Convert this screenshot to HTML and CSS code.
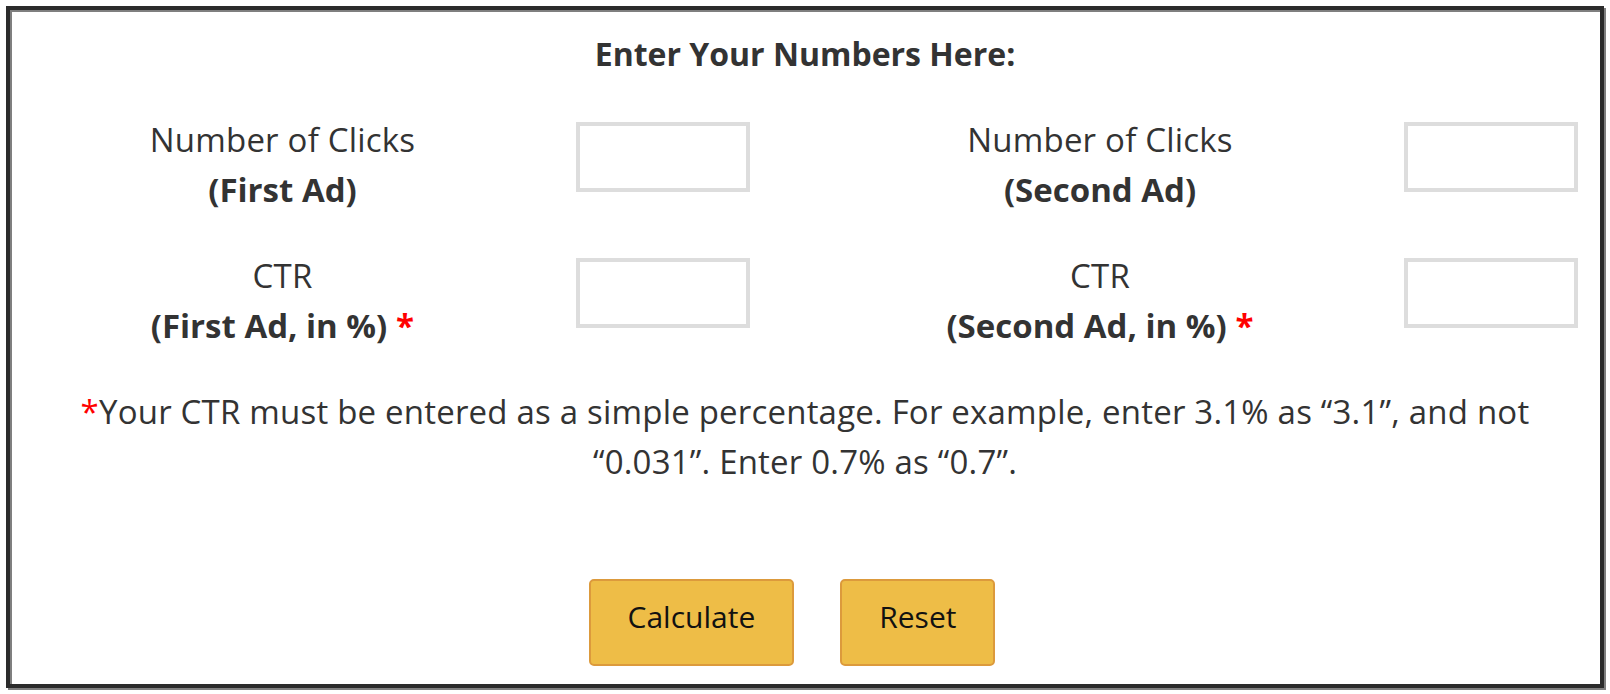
FILE: index.html
```html
<!DOCTYPE html>
<html lang="en">
<head>
<meta charset="utf-8">
<title>CTR Calculator</title>
<link rel="stylesheet" href="styles.css">
</head>
<body>
<div class="frame">
  <h2 class="title">Enter Your Numbers Here:</h2>
  <div class="fields">
    <label class="label label-left">Number of Clicks<br><b>(First Ad)</b></label>
    <input class="field" type="text">
    <label class="label label-right">Number of Clicks<br><b>(Second Ad)</b></label>
    <input class="field" type="text">
    <label class="label label-left">CTR<br><b>(First Ad, in %)</b> <span class="req">*</span></label>
    <input class="field" type="text">
    <label class="label label-right">CTR<br><b>(Second Ad, in %)</b> <span class="req">*</span></label>
    <input class="field" type="text">
  </div>
  <p class="note"><span class="req-plain">*</span>Your CTR must be entered as a simple percentage. For example, enter 3.1% as “3.1”, and not “0.031”. Enter 0.7% as “0.7”.</p>
  <div class="actions">
    <button class="btn" type="button">Calculate</button>
    <button class="btn" type="button">Reset</button>
  </div>
</div>
</body>
</html>
```

FILE: styles.css
```css
html, body {
  margin: 0;
  padding: 0;
  background: #ffffff;
}

body {
  font-family: "Open Sans", "Noto Sans", "Liberation Sans", sans-serif;
  color: #333333;
  font-size: 33px;
  line-height: 50px;
}

.frame {
  box-sizing: border-box;
  width: 1598px;
  height: 682px;
  margin: 6px;
  border: 4px solid #2b2b2b;
  box-shadow: inset 2px 2px 0 #7f7f7f, 2px 2px 0 #7f7f7f;
  padding-top: 19px;
}

.title {
  margin: 0 0 36px;
  font-size: 32px;
  line-height: 50px;
  font-weight: 700;
  text-align: center;
  color: #333333;
}

.fields {
  display: grid;
  grid-template-columns: 566px 174px 654px 174px;
  row-gap: 36px;
  align-items: start;
}

.label {
  display: block;
  text-align: center;
  letter-spacing: 0.2px;
}

.label b {
  font-weight: 700;
  letter-spacing: 0;
}

.label-left {
  padding-right: 21px;
}

.label-right {
  padding-left: 46px;
}

.req {
  color: #ff0000;
  font-weight: 700;
}

.req-plain {
  color: #ff0000;
}

.field {
  box-sizing: border-box;
  width: 174px;
  height: 70px;
  margin: 7px 0 0;
  border: 4px solid #dddddd;
  background: #ffffff;
  padding: 0 8px;
  font: inherit;
  outline: none;
}

.note {
  max-width: 1520px;
  margin: 36px auto 0;
  text-align: center;
  line-height: 50px;
  letter-spacing: 0.2px;
}

.actions {
  display: flex;
  justify-content: center;
  gap: 46px;
  margin-top: 92px;
  padding-right: 26px;
}

.btn {
  box-sizing: border-box;
  height: 87px;
  padding: 0 37px 11px;
  border: 2px solid #dc9a3c;
  border-radius: 5px;
  background: #eebd47;
  color: #111111;
  font-family: inherit;
  font-size: 30px;
  line-height: 1;
}
```
